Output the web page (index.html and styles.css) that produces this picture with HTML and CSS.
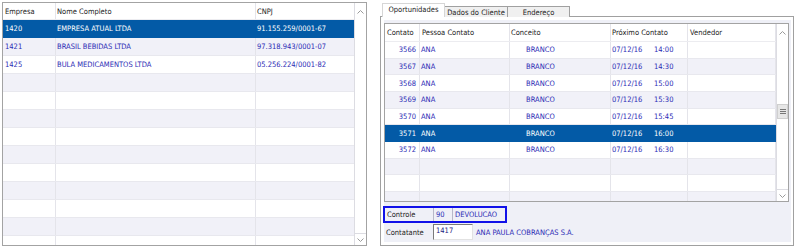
FILE: index.html
```html
<!DOCTYPE html>
<html lang="pt-BR">
<head>
  <meta charset="UTF-8">
  <title>Oportunidades</title>
  <link rel="stylesheet" href="styles.css">
</head>
<body>
  <div class="screen">

    <!-- Empresas -->
    <div class="grid grid-empresas">
      <div class="grid-table">
        <div class="grid-head">
          <div class="cell c-emp">Empresa</div>
          <div class="cell c-nome">Nome Completo</div>
          <div class="cell c-cnpj">CNPJ</div>
        </div>
        <div class="row selected">
          <div class="cell c-emp">1420</div>
          <div class="cell c-nome">EMPRESA ATUAL LTDA</div>
          <div class="cell c-cnpj">91.155.259/0001-67</div>
        </div>
        <div class="row odd">
          <div class="cell c-emp">1421</div>
          <div class="cell c-nome">BRASIL BEBIDAS LTDA</div>
          <div class="cell c-cnpj">97.318.943/0001-07</div>
        </div>
        <div class="row">
          <div class="cell c-emp">1425</div>
          <div class="cell c-nome">BULA MEDICAMENTOS LTDA</div>
          <div class="cell c-cnpj">05.256.224/0001-82</div>
        </div>
        <div class="row odd"><div class="cell c-emp"></div><div class="cell c-nome"></div><div class="cell c-cnpj"></div></div>
        <div class="row"><div class="cell c-emp"></div><div class="cell c-nome"></div><div class="cell c-cnpj"></div></div>
        <div class="row odd"><div class="cell c-emp"></div><div class="cell c-nome"></div><div class="cell c-cnpj"></div></div>
        <div class="row"><div class="cell c-emp"></div><div class="cell c-nome"></div><div class="cell c-cnpj"></div></div>
        <div class="row odd"><div class="cell c-emp"></div><div class="cell c-nome"></div><div class="cell c-cnpj"></div></div>
        <div class="row"><div class="cell c-emp"></div><div class="cell c-nome"></div><div class="cell c-cnpj"></div></div>
        <div class="row odd"><div class="cell c-emp"></div><div class="cell c-nome"></div><div class="cell c-cnpj"></div></div>
        <div class="row"><div class="cell c-emp"></div><div class="cell c-nome"></div><div class="cell c-cnpj"></div></div>
        <div class="row odd"><div class="cell c-emp"></div><div class="cell c-nome"></div><div class="cell c-cnpj"></div></div>
        <div class="row"><div class="cell c-emp"></div><div class="cell c-nome"></div><div class="cell c-cnpj"></div></div>
      </div>
      <div class="vscroll">
        <div class="arrow arrow-up">
          <svg width="7" height="4" viewBox="0 0 7 4"><polyline points="0.5,3.5 3.5,0.5 6.5,3.5" fill="none" stroke="#9a9a9a"/></svg>
        </div>
        <div class="track"></div>
        <div class="arrow arrow-down">
          <svg width="7" height="4" viewBox="0 0 7 4"><polyline points="0.5,0.5 3.5,3.5 6.5,0.5" fill="none" stroke="#9a9a9a"/></svg>
        </div>
      </div>
    </div>

    <!-- Abas do cliente -->
    <div class="tabs">
      <div class="tab-strip">
        <div class="tab active">Oportunidades</div>
        <div class="tab">Dados do Cliente</div>
        <div class="tab tab-end">Endereço</div>
      </div>
      <div class="tab-page">
        <div class="panel">
          <div class="grid grid-oport">
            <div class="grid-table">
              <div class="grid-head head-tall">
                <div class="cell o-cont">Contato</div>
                <div class="cell o-pess">Pessoa Contato</div>
                <div class="cell o-conc">Conceito</div>
                <div class="cell o-prox">Próximo Contato</div>
                <div class="cell o-vend">Vendedor</div>
              </div>
              <div class="row row-sm">
                <div class="cell o-cont num">3566</div>
                <div class="cell o-pess">ANA</div>
                <div class="cell o-conc">BRANCO</div>
                <div class="cell o-prox"><span class="date">07/12/16</span>14:00</div>
                <div class="cell o-vend"></div>
              </div>
              <div class="row row-sm odd">
                <div class="cell o-cont num">3567</div>
                <div class="cell o-pess">ANA</div>
                <div class="cell o-conc">BRANCO</div>
                <div class="cell o-prox"><span class="date">07/12/16</span>14:30</div>
                <div class="cell o-vend"></div>
              </div>
              <div class="row row-sm">
                <div class="cell o-cont num">3568</div>
                <div class="cell o-pess">ANA</div>
                <div class="cell o-conc">BRANCO</div>
                <div class="cell o-prox"><span class="date">07/12/16</span>15:00</div>
                <div class="cell o-vend"></div>
              </div>
              <div class="row row-sm odd">
                <div class="cell o-cont num">3569</div>
                <div class="cell o-pess">ANA</div>
                <div class="cell o-conc">BRANCO</div>
                <div class="cell o-prox"><span class="date">07/12/16</span>15:30</div>
                <div class="cell o-vend"></div>
              </div>
              <div class="row row-sm">
                <div class="cell o-cont num">3570</div>
                <div class="cell o-pess">ANA</div>
                <div class="cell o-conc">BRANCO</div>
                <div class="cell o-prox"><span class="date">07/12/16</span>15:45</div>
                <div class="cell o-vend"></div>
              </div>
              <div class="row row-sm selected">
                <div class="cell o-cont num">3571</div>
                <div class="cell o-pess">ANA</div>
                <div class="cell o-conc">BRANCO</div>
                <div class="cell o-prox"><span class="date">07/12/16</span>16:00</div>
                <div class="cell o-vend"></div>
              </div>
              <div class="row row-sm">
                <div class="cell o-cont num">3572</div>
                <div class="cell o-pess">ANA</div>
                <div class="cell o-conc">BRANCO</div>
                <div class="cell o-prox"><span class="date">07/12/16</span>16:30</div>
                <div class="cell o-vend"></div>
              </div>
              <div class="row row-sm odd"><div class="cell o-cont"></div><div class="cell o-pess"></div><div class="cell o-conc"></div><div class="cell o-prox"></div><div class="cell o-vend"></div></div>
              <div class="row row-sm"><div class="cell o-cont"></div><div class="cell o-pess"></div><div class="cell o-conc"></div><div class="cell o-prox"></div><div class="cell o-vend"></div></div>
              <div class="row row-sm odd"><div class="cell o-cont"></div><div class="cell o-pess"></div><div class="cell o-conc"></div><div class="cell o-prox"></div><div class="cell o-vend"></div></div>
            </div>
            <div class="vscroll">
              <div class="arrow arrow-up up-tall">
                <svg width="7" height="4" viewBox="0 0 7 4"><polyline points="0.5,3.5 3.5,0.5 6.5,3.5" fill="none" stroke="#9a9a9a"/></svg>
              </div>
              <div class="track">
                <div class="thumb">
                  <svg width="6" height="5" viewBox="0 0 6 5"><path d="M0 0.5H6M0 2.5H6M0 4.5H6" stroke="#777"/></svg>
                </div>
              </div>
              <div class="arrow arrow-down">
                <svg width="7" height="4" viewBox="0 0 7 4"><polyline points="0.5,0.5 3.5,3.5 6.5,0.5" fill="none" stroke="#9a9a9a"/></svg>
              </div>
            </div>
          </div>

          <div class="controle">
            <div class="f-label">Controle</div>
            <div class="f-code">90</div>
            <div class="f-desc">DEVOLUCAO</div>
          </div>
          <div class="contatante">
            <div class="f-label">Contatante</div>
            <div class="f-input">1417</div>
            <div class="f-name">ANA PAULA COBRANÇAS S.A.</div>
          </div>
        </div>
      </div>
    </div>

  </div>
</body>
</html>
```

FILE: styles.css
```css
body {
  margin: 0;
  background: #fff;
  font-family: "DejaVu Sans Condensed", "DejaVu Sans", sans-serif;
  font-stretch: condensed;
  font-size: 7.5px;
  color: #222;
}
.screen {
  display: flex;
  align-items: flex-start;
  padding: 2px 0 0 2px;
}
/* Data grids */
.grid {
  display: flex;
  border: 1px solid #a3a3a3;
  background: #fff;
  overflow: hidden;
}
.grid-empresas {
  width: 363px;
  height: 242px;
}
.grid-table {
  flex: 1;
  overflow: hidden;
}
.grid-head,
.row {
  display: flex;
  box-sizing: border-box;
}
.grid-head {
  height: 17px;
  background: #fff;
  border-bottom: 1px solid #ececf0;
}
.head-tall {
  height: 18px;
}
.row {
  height: 18px;
  border-bottom: 1px solid #e8e8ee;
  color: #2b2bb5;
}
.row-sm {
  height: 16.67px;
}
.row.odd {
  background: #f1f1f8;
}
.row.selected {
  background: #035aa6;
  color: #fff;
  border-bottom-color: #035aa6;
}
.cell {
  box-sizing: border-box;
  display: flex;
  align-items: center;
  padding-left: 2px;
  white-space: nowrap;
  border-right: 1px solid #e4e4ea;
  flex: none;
}
.c-emp { width: 53px; }
.c-nome { width: 200px; padding-left: 1px; }
.c-cnpj { width: 99px; padding-left: 1px; }

.o-cont { width: 35px; }
.o-pess { width: 90px; }
.o-conc { width: 101px; padding-left: 1px; }
.o-prox { width: 77px; padding-left: 1px; }
.o-vend { width: 88px; }
.row .o-pess { padding-left: 1px; }
.row .o-conc { padding-left: 16px; }
.num {
  justify-content: flex-end;
  padding: 0 3px 0 0;
}
.date {
  display: inline-block;
  width: 42px;
}
.selected .cell {
  border-right-color: #035aa6;
}
/* Scrollbars */
.vscroll {
  width: 11px;
  display: flex;
  flex-direction: column;
  background: #fff;
  border-left: 1px solid #dcdce2;
}
.arrow {
  display: flex;
  align-items: center;
  justify-content: center;
  flex: none;
}
.arrow-up {
  height: 17px;
}
.up-tall {
  height: 18px;
}
.arrow-down {
  height: 11px;
  border-top: 1px solid #dcdce2;
}
.track {
  flex: 1;
}
.thumb {
  margin-top: 62px;
  height: 15px;
  background: #e6e6e6;
  border: 1px solid #cfcfcf;
  box-sizing: border-box;
  display: flex;
  align-items: center;
  justify-content: center;
}
/* Tabs */
.tabs {
  margin-left: 13px;
  margin-top: 2px;
  width: 414px;
}
.tab-strip {
  display: flex;
  align-items: flex-end;
  height: 13px;
  padding-left: 2px;
  margin-bottom: -1px;
  position: relative;
  z-index: 1;
}
.tab {
  box-sizing: border-box;
  height: 11px;
  width: 63px;
  background: #f0f0f0;
  border: 1px solid #a0a0a0;
  border-left: none;
  border-bottom: none;
  display: flex;
  align-items: center;
  justify-content: center;
  color: #222;
}
.tab.active {
  height: 14px;
  background: #fff;
  border: 1px solid #d6d6d6;
  border-bottom: none;
  padding-bottom: 2px;
}
.tab-end {
  width: 62px;
}
.tab-page {
  box-sizing: border-box;
  height: 230px;
  border: 1px solid #a0a0a0;
  background: #fff;
  padding: 3px 2px 3px 3px;
}
.panel {
  height: 222px;
  background: #eff0f7;
  padding: 3px 2px 0 0;
  box-sizing: border-box;
}
.grid-oport {
  width: 403px;
  height: 177px;
}
/* Form fields under the grid */
.controle {
  display: flex;
  height: 13px;
  width: 120px;
  margin: 4px 0 0 -1px;
  border: 2px solid #1111e8;
  align-items: stretch;
}
.controle div {
  display: flex;
  align-items: center;
  padding-left: 2px;
}
.controle .f-label {
  width: 46px;
  border-right: 1px solid #b8b8c8;
}
.f-code {
  width: 16px;
  color: #2b2bb5;
  border-right: 1px solid #b8b8c8;
}
.f-desc {
  color: #2b2bb5;
}
.contatante {
  display: flex;
  align-items: center;
  margin-top: 1px;
  height: 16px;
}
.contatante .f-label {
  width: 47px;
  padding-left: 2px;
}
.f-input {
  box-sizing: border-box;
  width: 40px;
  height: 16px;
  background: #fff;
  border: 1px solid #e2e2e2;
  border-top-color: #7a7a7a;
  border-left-color: #7a7a7a;
  padding: 1px 0 0 2px;
  color: #1a1a80;
}
.f-name {
  margin-left: 3px;
  color: #2b2bb5;
}
```
